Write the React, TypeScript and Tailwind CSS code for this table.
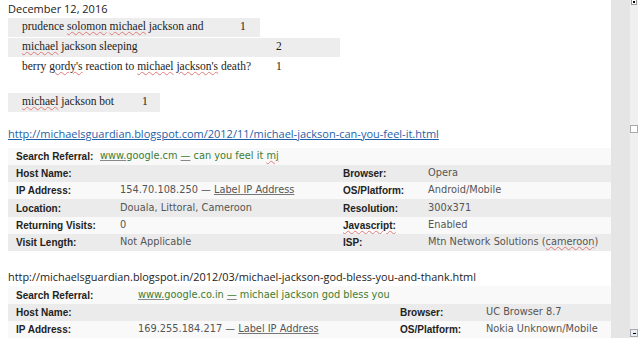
import React from "react";

const serif = { fontFamily: '"Liberation Serif", "Times New Roman", serif' };
const label = "font-['Liberation_Sans',Arial,sans-serif] font-bold text-[10px] text-[#222]";
const val = "font-['DejaVu_Sans',Verdana,sans-serif] text-[9.8px] text-[#555]";
const squig = "underline decoration-wavy decoration-[#e07a7a] decoration-1 underline-offset-[1px]";

function Sq({ children }: { children: React.ReactNode }) {
  return <span className={squig}>{children}</span>;
}

type Row = { l: string; v?: React.ReactNode; l2?: React.ReactNode; v2?: React.ReactNode; gray?: boolean };

function DataTable({
  rows,
  c1,
  c2,
  c3,
}: {
  rows: Row[];
  c1: string;
  c2: string;
  c3: string;
}) {
  return (
    <div className="ml-[8px] flex flex-col">
      {rows.map((r, i) => (
        <div
          key={i}
          className={`flex h-[17.2px] items-center ${r.gray ? "bg-[#ebebeb]" : "bg-[#f9f9f9]"}`}
        >
          <div className={`${c1} shrink-0 pl-[8px] ${label}`}>{r.l}</div>
          <div className={`${c2} shrink-0 whitespace-nowrap ${val}`}>{r.v}</div>
          <div className={`${c3} shrink-0 ${label}`}>{r.l2}</div>
          <div className={`whitespace-nowrap ${val}`}>{r.v2}</div>
        </div>
      ))}
    </div>
  );
}

export default function App() {
  const green = "text-[#3d7d2f]";
  return (
    <div className="flex h-[338px] w-[638px] overflow-hidden bg-white">
      <div className="flex w-[611px] shrink-0 flex-col">
        <div className="h-[18px] pl-[8px] pt-[2px] font-['Open_Sans',sans-serif] text-[11px] leading-[14px] text-[#222]">
          December 12, 2016
        </div>
        <div className="ml-[8px] flex flex-col text-[11.5px] text-[#222]" style={serif}>
          <div className="flex h-[19px] w-[252px] items-center bg-[#ededed]">
            <div className="w-[232px] shrink-0 pl-[14px]">
              prudence <Sq>solomon</Sq> <Sq>michael</Sq> jackson and
            </div>
            <div>1</div>
          </div>
          <div className="mt-[1px] flex h-[19px] w-[332px] items-center bg-[#ededed]">
            <div className="w-[268px] shrink-0 pl-[14px]">
              <Sq>michael</Sq> jackson sleeping
            </div>
            <div>2</div>
          </div>
          <div className="mt-[1px] flex h-[19px] w-[332px] items-center">
            <div className="w-[268px] shrink-0 pl-[14px]">
              berry <Sq>gordy's</Sq> reaction to <Sq>michael</Sq> <Sq>jackson's</Sq> death?
            </div>
            <div>1</div>
          </div>
          <div className="mt-[16px] flex h-[19px] w-[152px] items-center bg-[#ededed]">
            <div className="w-[134px] shrink-0 pl-[14px]">
              <Sq>michael</Sq> jackson bot
            </div>
            <div>1</div>
          </div>
        </div>
        <div className="mt-[14px] h-[21px] pl-[8px] font-['Open_Sans',sans-serif] text-[11px] leading-[16px] text-[#1f5fa8] underline decoration-[#1f5fa8]">
          http://michaelsguardian.blogspot.com/2012/11/michael-jackson-can-you-feel-it.html
        </div>
        <div className="h-[2px]" />
        <DataTable
          c1="w-[92px]"
          c2="w-[243px]"
          c3="w-[85px]"
          rows={[
            {
              l: "Search Referral:",
              v: (
                <span className={green}>
                  <span className="underline decoration-[#888]">www.</span>google.cm{" "}
                  <span className="underline decoration-[#888]">—</span> can you feel it <Sq>mj</Sq>
                </span>
              ),
            },
            { l: "Host Name:", l2: "Browser:", v2: "Opera", gray: true },
            {
              l: "IP Address:",
              v: (
                <span className="pl-[20px]">
                  154.70.108.250 — <span className="underline decoration-[#777]">Label IP Address</span>
                </span>
              ),
              l2: "OS/Platform:",
              v2: "Android/Mobile",
            },
            {
              l: "Location:",
              v: <span className="pl-[20px]">Douala, Littoral, Cameroon</span>,
              l2: "Resolution:",
              v2: "300x371",
              gray: true,
            },
            {
              l: "Returning Visits:",
              v: <span className="pl-[20px]">0</span>,
              l2: <Sq>Javascript:</Sq>,
              v2: "Enabled",
            },
            {
              l: "Visit Length:",
              v: <span className="pl-[20px]">Not Applicable</span>,
              l2: "ISP:",
              v2: (
                <span>
                  Mtn Network Solutions (<Sq>cameroon</Sq>)
                </span>
              ),
              gray: true,
            },
          ]}
        />
        <div className="mt-[18px] h-[18px] pl-[8px] font-['Open_Sans',sans-serif] text-[10.9px] leading-[16px] text-[#222]">
          http://michaelsguardian.blogspot.in/2012/03/michael-jackson-god-bless-you-and-thank.html
        </div>
        <DataTable
          c1="w-[130px]"
          c2="w-[262px]"
          c3="w-[86px]"
          rows={[
            {
              l: "Search Referral:",
              v: (
                <span className={green}>
                  <span className="underline decoration-[#888]">www.</span>google.co.in{" "}
                  <span className="underline decoration-[#888]">—</span> michael jackson god bless you
                </span>
              ),
            },
            { l: "Host Name:", l2: "Browser:", v2: "UC Browser 8.7", gray: true },
            {
              l: "IP Address:",
              v: (
                <span>
                  169.255.184.217 — <span className="underline decoration-[#777]">Label IP Address</span>
                </span>
              ),
              l2: "OS/Platform:",
              v2: "Nokia Unknown/Mobile",
            },
          ]}
        />
      </div>
      <div className="w-[19px] shrink-0 bg-[#e5e5e5]" />
      <div className="flex w-[8px] shrink-0 flex-col bg-[#f0f0f0]">
        <div className="mx-[1px] flex h-[5px] items-end justify-center border-x border-b border-[#999] bg-white">
          <div className="mb-[1px] h-[2px] w-[2px] bg-black" />
        </div>
        <div className="mt-[120px] h-[8px] w-[8px] border border-[#aaa] bg-white" />
        <div className="flex-1" />
        <div className="mb-[1px] flex h-[8px] items-center justify-center border border-[#aaa] bg-[#e8eef6]">
          <div className="h-[1px] w-[3px] bg-black" />
        </div>
      </div>
    </div>
  );
}
